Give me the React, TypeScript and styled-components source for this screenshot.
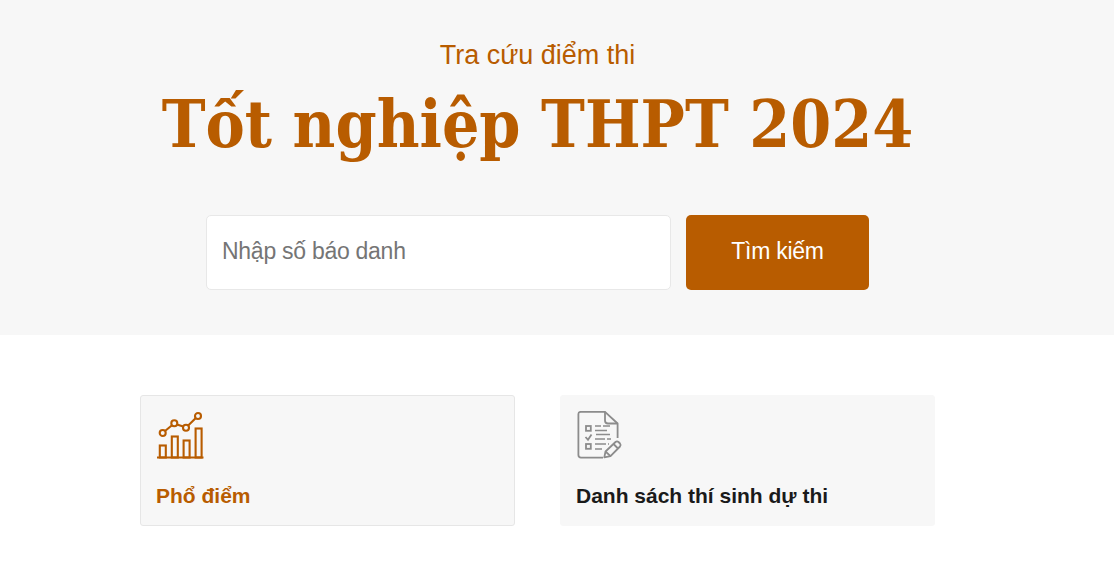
import React from 'react';
import styled, { createGlobalStyle } from 'styled-components';

const brand = '#b85c00';

const GlobalStyle = createGlobalStyle`
  html, body {
    margin: 0;
    padding: 0;
    background: #fff;
    font-family: 'Liberation Sans', Arial, sans-serif;
  }
  * {
    box-sizing: border-box;
  }
`;

const ChartIcon = () => (
  <svg width="48" height="48" viewBox="0 0 48 48" fill="none" stroke={brand} strokeWidth="2.1">
    <path d="M1 46.4H47.5" strokeWidth="2" />
    <rect x="3.8" y="34.5" width="6" height="12" />
    <rect x="15.8" y="25.5" width="6" height="21" />
    <rect x="27.6" y="29.5" width="6" height="17" />
    <rect x="39.6" y="17.5" width="6" height="29" />
    <path d="M9 20L16 14.2M21 13.4L27.2 15.6M32.2 14.6L39.8 7" />
    <circle cx="6.7" cy="22" r="3" />
    <circle cx="18.3" cy="12.3" r="3" />
    <circle cx="30" cy="16.7" r="3" />
    <circle cx="42" cy="5" r="3" />
  </svg>
);

const ListIcon = () => (
  <svg width="48" height="48" viewBox="0 0 48 48" fill="none" stroke="#8c8c8c" strokeWidth="1.8">
    <path d="M27 46.6H5Q2.4 46.6 2.4 44V3Q2.4 0.8 5 0.8H29L41.6 12.5V27" strokeLinejoin="round" />
    <path d="M29 0.8V9.5Q29 12.5 32 12.5H41.6" />
    <rect x="10" y="15" width="4.8" height="4.8" />
    <rect x="10" y="33" width="4.8" height="4.8" />
    <path d="M9.5 26L12 28.8L15.5 23.5" />
    <path d="M19 15H25M27 15H34M19 19.5H31M20 23.5H34M19 28H29M31 28H35M19 33H30M19 38H26M32 33H33" strokeWidth="1.5" />
    <path d="M28.3 46.4L29.5 40.5L39.5 31Q41 29.7 42.5 31L44 32.5Q45.3 34 44 35.5L34.5 45.2Z" strokeLinejoin="round" />
    <path d="M37.5 33L42 37.5M29.5 40.5L34.5 45.2" />
  </svg>
);

export default function App() {
  return (
    <>
      <GlobalStyle />
      <Hero>
        <Inner>
          <Subtitle>Tra cứu điểm thi</Subtitle>
          <Title>Tốt nghiệp THPT 2024</Title>
          <SearchForm onSubmit={(e) => e.preventDefault()}>
            <SearchInput type="text" placeholder="Nhập số báo danh" />
            <SearchButton type="submit">Tìm kiếm</SearchButton>
          </SearchForm>
        </Inner>
      </Hero>
      <Inner>
        <Cards>
          <Card $active>
            <ChartIcon />
            <CardTitle $active>Phổ điểm</CardTitle>
          </Card>
          <Card>
            <ListIcon />
            <CardTitle>Danh sách thí sinh dự thi</CardTitle>
          </Card>
        </Cards>
      </Inner>
    </>
  );
}

const Hero = styled.section`
  height: 335px;
  background: #f7f7f7;
  padding-top: 38px;
`;
const Inner = styled.div`
  width: 1075px;
  display: flex;
  flex-direction: column;
  align-items: center;
`;
const Subtitle = styled.h2`
  margin: 0;
  font-size: 27px;
  line-height: 34px;
  font-weight: 400;
  color: ${brand};
`;
const Title = styled.h1`
  margin: 7px 0 0;
  font-family: 'DejaVu Serif Condensed', 'DejaVu Serif', serif;
  font-stretch: condensed;
  font-size: 65.5px;
  line-height: 90px;
  font-weight: 700;
  color: ${brand};
  white-space: nowrap;
`;
const SearchForm = styled.form`
  display: flex;
  gap: 15px;
  margin-top: 46px;
`;
const SearchInput = styled.input`
  width: 465px;
  height: 75px;
  padding: 0 15px 2px;
  border: 1px solid #e8e8e8;
  border-radius: 5px;
  background: #fff;
  font-family: inherit;
  font-size: 23px;
  letter-spacing: -0.27px;
  color: #333;
  outline: none;
  &::placeholder {
    color: #757575;
  }
`;
const SearchButton = styled.button`
  width: 183px;
  height: 75px;
  padding: 0 0 2px;
  border: none;
  border-radius: 5px;
  background: ${brand};
  color: #fff;
  font-family: inherit;
  font-size: 23px;
  letter-spacing: -0.27px;
`;
const Cards = styled.div`
  display: flex;
  gap: 45px;
  margin-top: 60px;
`;
const Card = styled.div<{ $active?: boolean }>`
  width: 375px;
  height: 131px;
  padding: 15px;
  border: 1px solid ${(p) => (p.$active ? '#e6e6e6' : '#f7f7f7')};
  border-radius: 3px;
  background: #f7f7f7;
  svg {
    display: block;
  }
`;
const CardTitle = styled.h3<{ $active?: boolean }>`
  margin: 25px 0 0;
  font-size: 21px;
  line-height: 24px;
  font-weight: 700;
  color: ${(p) => (p.$active ? brand : '#1a1a1a')};
`;
